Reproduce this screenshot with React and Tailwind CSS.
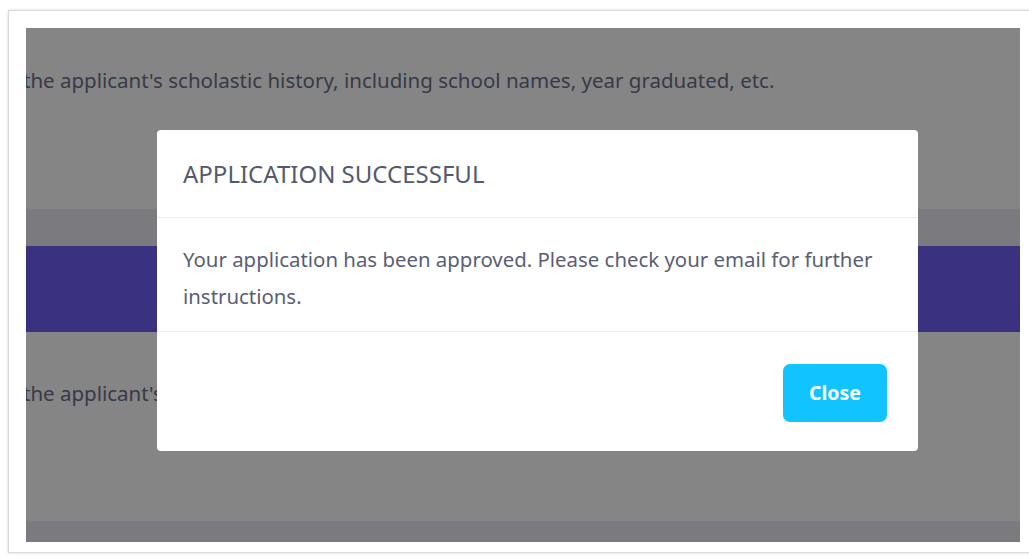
import React from 'react';

const font = { fontFamily: '"Noto Sans", "Open Sans", sans-serif' };

const historyNote =
  "the applicant's scholastic history, including school names, year graduated, etc.";

function Section({ text, className }) {
  return (
    <div className={`h-[181px] bg-white -ml-[3px] ${className}`}>
      <p className="text-[20.5px] leading-[28px] text-[#6b6f88] whitespace-nowrap">{text}</p>
    </div>
  );
}

function SuccessModal() {
  return (
    <div className="absolute left-[131px] top-[102px] w-[761px] h-[321px] bg-white rounded-[4px] flex flex-col">
      <div className="h-[88px] flex items-center px-[26px] border-b border-[#ececf1]">
        <h2 className="text-[24px] text-[#55596e]">APPLICATION SUCCESSFUL</h2>
      </div>
      <div className="h-[114px] pl-[26px] pr-[16px] pt-[23px] border-b border-[#ececf1]">
        <p className="text-[20.4px] leading-[37px] text-[#5a5e74]">
          Your application has been approved. Please check your email for further instructions.
        </p>
      </div>
      <div className="flex-1 flex justify-end items-start pt-[32px] pr-[31px]">
        <button className="w-[104px] h-[58px] rounded-[7px] bg-[#0fc4ff] text-white font-bold text-[19.5px]">
          Close
        </button>
      </div>
    </div>
  );
}

export default function App() {
  return (
    <div className="w-[1029px] h-[559px] bg-white overflow-hidden" style={font}>
      <div className="ml-[8px] mt-[10px] w-[1040px] h-[543px] border border-[#d9d9d9] shadow-[0_0_3px_rgba(0,0,0,0.15)] pl-[17px] pt-[17px] bg-white">
        <div className="relative w-[994px] h-[514px] overflow-hidden">
          <Section text={historyNote} className="pt-[38px]" />
          <div className="h-[37px] bg-[#ececf3]" />
          <div className="h-[86px] bg-[#6f60f5]" />
          <Section text={historyNote} className="h-[189px] pt-[47px]" />
          <div className="h-[30px] bg-[#ececf3]" />
          <div className="absolute inset-0 bg-black/[0.478]" />
          <SuccessModal />
        </div>
      </div>
    </div>
  );
}
